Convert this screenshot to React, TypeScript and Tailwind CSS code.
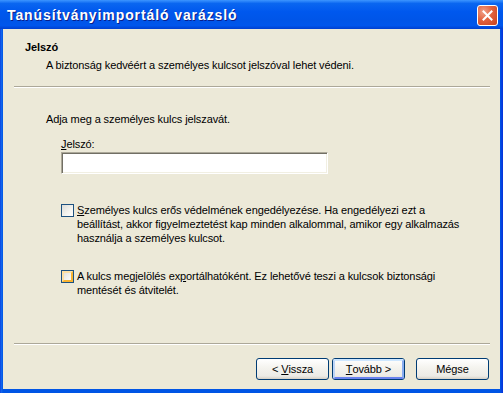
import React from "react";

const font = { fontFamily: '"Liberation Sans", Arial, sans-serif' };

function Checkbox({ hover }: { hover?: boolean }) {
  return (
    <div className="w-[13px] h-[13px] shrink-0 border border-[#1c5180] bg-[linear-gradient(135deg,#dcdcd7_0%,#f4f4f0_60%,#ffffff_100%)] mt-[1px] p-0">
      {hover ? (
        <div className="w-full h-full border-2 border-t-[#fee0a3] border-l-[#fee0a3] border-b-[#f8b330] border-r-[#f8b330]" />
      ) : null}
    </div>
  );
}

function Btn({ children, def }: { children: React.ReactNode; def?: boolean }) {
  return (
    <div className="w-[73px] h-[22px] rounded-[3px] border border-[#003c74] bg-[linear-gradient(to_bottom,#ffffff_0%,#f4f3ee_45%,#ecebe6_85%,#d6d0c5_100%)] flex items-center justify-center text-[11px] text-black">
      {def ? (
        <div className="w-full h-full rounded-[2px] border-2 border-t-[#cee7ff] border-l-[#bcd4f6] border-r-[#89adf0] border-b-[#6982ee] flex items-center justify-center">
          {children}
        </div>
      ) : (
        children
      )}
    </div>
  );
}

export default function App() {
  return (
    <div
      className="w-[503px] h-[393px] flex flex-col bg-[#0054e3] text-[11px] leading-[14px] tracking-[-0.1px] text-black"
      style={font}
    >
      {/* title bar */}
      <div className="h-[29px] shrink-0 flex items-center pl-[7px] pr-[5px] bg-[linear-gradient(to_bottom,#3d95ff_0%,#0a66f0_12%,#0058ee_40%,#0055e8_70%,#0056ec_88%,#003fd0_100%)]">
        <div
          className="flex-1 text-white font-bold text-[14px] leading-[16px] pt-[1px] tracking-[0.9px] [text-shadow:1px_1px_0_#0a1e8a]"
          style={{ fontFamily: '"Liberation Sans", Arial, sans-serif' }}
        >
          Tanúsítványimportáló varázsló
        </div>
        <div className="w-[21px] h-[21px] rounded-[3px] border border-white bg-[radial-gradient(circle_at_30%_30%,#f0a088_0%,#e2623e_45%,#c8401c_100%)] flex items-center justify-center mt-[1px]">
          <svg width="11" height="11" viewBox="0 0 11 11">
            <path d="M1.5 1.5 L9.5 9.5 M9.5 1.5 L1.5 9.5" stroke="#ffffff" strokeWidth="2" strokeLinecap="square" />
          </svg>
        </div>
      </div>

      {/* body with frame */}
      <div className="flex-1 flex px-[3px] pb-[4px] bg-[linear-gradient(to_right,#0831d9_0px,#166aee_1px,#0055e5_3px,#0055e5_calc(100%-3px),#0831d9_100%)]">
        <div className="flex-1 flex flex-col bg-[#ece9d8]">
          {/* header */}
          <div className="pt-[11px] pl-[22px] font-bold">Jelszó</div>
          <div className="mt-[4px] pl-[43px]">
            A biztonság kedvéért a személyes kulcsot jelszóval lehet védeni.
          </div>
          <div className="mt-[14px] ml-[11px] mr-[10px] h-[2px] border-t border-t-[#aca899] border-b border-b-white" />

          {/* content */}
          <div className="h-[255px] flex flex-col">
            <div className="mt-[24px] pl-[43px]">Adja meg a személyes kulcs jelszavát.</div>
            <div className="mt-[11px] pl-[58px]">
              <u>J</u>elszó:
            </div>
            <div className="mt-[1px] ml-[58px] w-[267px] h-[22px] bg-white border border-t-[#aca899] border-l-[#aca899] border-b-white border-r-white shadow-[inset_1px_1px_0_#716f64,inset_-1px_-1px_0_#f1efe2]" />

            <div className="mt-[29px] ml-[58px] flex gap-[3px]">
              <Checkbox />
              <div>
                <u>S</u>zemélyes kulcs erős védelmének engedélyezése. Ha engedélyezi ezt a
                <br />
                beállítást, akkor figyelmeztetést kap minden alkalommal, amikor egy alkalmazás
                <br />
                használja a személyes kulcsot.
              </div>
            </div>

            <div className="mt-[24px] ml-[58px] flex gap-[3px]">
              <Checkbox hover />
              <div>
                A kulcs megjelölés ex<u>p</u>ortálhatóként. Ez lehetővé teszi a kulcsok biztonsági
                <br />
                mentését és átvitelét.
              </div>
            </div>
          </div>

          <div className="ml-[11px] mr-[10px] h-[2px] border-t border-t-[#aca899] border-b border-b-white" />

          <div className="mt-[13px] flex justify-end pr-[11px]">
            <Btn>
              &lt;&nbsp;<u>V</u>issza
            </Btn>
            <div className="w-[3px]" />
            <Btn def>
              <u>T</u>ovább &gt;
            </Btn>
            <div className="w-[11px]" />
            <Btn>Mégse</Btn>
          </div>
        </div>
      </div>
    </div>
  );
}
